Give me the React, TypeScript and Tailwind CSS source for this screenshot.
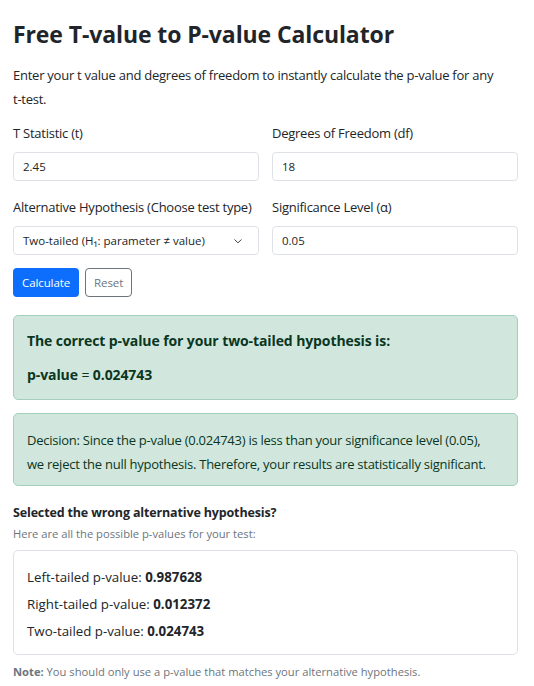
import { useState } from 'react';

const font = "font-['Segoe_UI','Open_Sans',sans-serif]";

function Field({ label, value }: { label: string; value: string }) {
  return (
    <div className="flex flex-col">
      <label className="text-[13px] tracking-[-0.25px] text-[#212529] leading-[20px] mb-[9px] whitespace-nowrap">{label}</label>
      <input
        readOnly
        value={value}
        className="h-[29px] rounded-[4px] border border-[#dee2e6] px-[9px] text-[11.5px] text-[#212529] bg-white outline-none"
      />
    </div>
  );
}

export default function App() {
  const [tValue] = useState('2.45');
  const [df] = useState('18');
  const [alpha] = useState('0.05');

  return (
    <div className={`${font} bg-white text-[#212529] pl-[13px] pr-[16px] pt-[20px] pb-4 w-[534px]`}>
      <h1 className="text-[23px] tracking-[-0.1px] font-bold leading-[29px] text-[#212529]">Free T-value to P-value Calculator</h1>
      <p className="mt-[14px] text-[13px] tracking-[-0.25px] leading-[24px]">
        Enter your t value and degrees of freedom to instantly calculate the p-value for any{' '}
        <span className="whitespace-nowrap">t-test.</span>
      </p>

      <div className="grid grid-cols-2 gap-x-[13px] gap-y-[16px] mt-[12px]">
        <Field label="T Statistic (t)" value={tValue} />
        <Field label="Degrees of Freedom (df)" value={df} />
        <div className="flex flex-col">
          <label className="text-[13px] tracking-[-0.25px] leading-[20px] mb-[9px] whitespace-nowrap">
            Alternative Hypothesis (Choose test type)
          </label>
          <div className="h-[29px] rounded-[4px] border border-[#dee2e6] px-[9px] flex items-center justify-between text-[11.5px]">
            <span>Two-tailed (H₁: parameter ≠ value)</span>
            <svg width="10" height="10" viewBox="0 0 16 16" className="mr-[6px]">
              <path d="M3 6l5 5 5-5" fill="none" stroke="#343a40" strokeWidth="1.6" strokeLinecap="round" strokeLinejoin="round" />
            </svg>
          </div>
        </div>
        <Field label="Significance Level (α)" value={alpha} />
      </div>

      <div className="flex gap-[6px] mt-[13px]">
        <button className="h-[29px] px-[9px] rounded-[4px] bg-[#0d6efd] text-white text-[11.5px] tracking-[-0.1px]">Calculate</button>
        <button className="h-[29px] px-[8px] rounded-[4px] border border-[#6c757d] text-[#6c757d] text-[11.5px] tracking-[-0.1px] bg-white">Reset</button>
      </div>

      <div className="mt-[18px] rounded-[5px] border border-[#a3cfbb] bg-[#d1e7dd] text-[#0a3622] px-[13px] pt-[14px] pb-[13px]">
        <div className="text-[14px] tracking-[-0.1px] font-bold leading-[22px]">The correct p-value for your two-tailed hypothesis is:</div>
        <div className="mt-[12px] text-[14px] tracking-[-0.1px] leading-[22px]">
          <b>p-value</b> = <b>0.024743</b>
        </div>
      </div>

      <div className="mt-[13px] rounded-[5px] border border-[#a3cfbb] bg-[#d1e7dd] text-[#0a3622] px-[13px] pt-[14px] pb-[9px] text-[13px] tracking-[-0.25px] leading-[24px]">
        Decision: Since the p-value (0.024743) is less than your significance level (0.05),
        <br />
        we reject the null hypothesis. Therefore, your results are statistically significant.
      </div>

      <div className="mt-[17px] text-[12.5px] tracking-[-0.15px] font-bold leading-[20px]">Selected the wrong alternative hypothesis?</div>
      <div className="text-[11.2px] text-[#6c757d] leading-[18px] mt-[2px]">Here are all the possible p-values for your test:</div>

      <div className="mt-[7px] rounded-[5px] border border-[#dee2e6] px-[13px] pt-[13px] pb-[9px] text-[13.3px] leading-[27px]">
        <div>Left-tailed p-value: <b>0.987628</b></div>
        <div>Right-tailed p-value: <b>0.012372</b></div>
        <div>Two-tailed p-value: <b>0.024743</b></div>
      </div>

      <div className="mt-[8px] text-[11.2px] text-[#6c757d] leading-[18px]">
        <b>Note:</b> You should only use a p-value that matches your alternative hypothesis.
      </div>
    </div>
  );
}
